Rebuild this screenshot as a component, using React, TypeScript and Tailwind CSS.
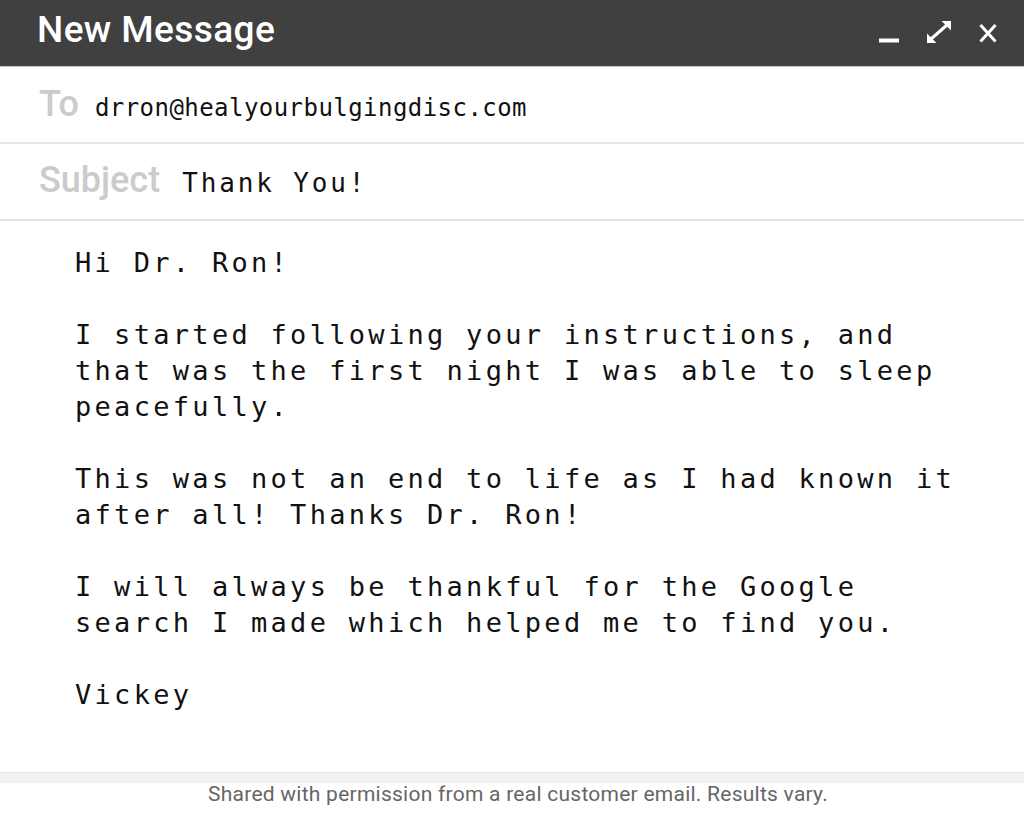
import React from "react";

const body = `Hi Dr. Ron!

I started following your instructions, and
that was the first night I was able to sleep
peacefully.

This was not an end to life as I had known it
after all! Thanks Dr. Ron!

I will always be thankful for the Google
search I made which helped me to find you.

Vickey`;

export default function App() {
  return (
    <div className="w-[1024px] h-[815px] flex flex-col bg-white overflow-hidden">
      <div className="h-[66px] shrink-0 bg-[#404040] flex items-start justify-between">
        <div className="pl-[37px] pt-[11px] text-white text-[37px] leading-[37px] tracking-[0.4px] font-medium font-['Roboto',sans-serif]">
          New Message
        </div>
        <div className="flex items-start gap-[28px] pr-[27px] pt-[21px]">
          <svg width="20" height="22" viewBox="0 0 20 22" className="block">
            <rect x="0" y="17.5" width="20" height="4" fill="white" />
          </svg>
          <svg width="24" height="22" viewBox="0 0 24 22" className="block">
            <line x1="4" y1="18" x2="20" y2="4" stroke="white" strokeWidth="3" />
            <polygon points="24,0 24,9.5 14.5,0" fill="white" />
            <polygon points="0,22 0,12.5 9.5,22" fill="white" />
          </svg>
          <svg width="18" height="22" viewBox="0 0 18 22" className="block">
            <line x1="1.5" y1="4" x2="16.5" y2="20.5" stroke="white" strokeWidth="3" />
            <line x1="16.5" y1="4" x2="1.5" y2="20.5" stroke="white" strokeWidth="3" />
          </svg>
        </div>
      </div>
      <div className="h-px shrink-0 bg-[#c4c4c4]" />
      <div className="h-[75px] shrink-0 flex items-baseline pt-[19px] pl-[39px]">
        <span className="text-[36px] leading-[36px] text-[#cbcbcb] font-medium font-['Roboto',sans-serif]">To</span>
        <span className="ml-[16px] text-[24px] leading-[24px] tracking-[0.45px] text-[#111] font-['DejaVu_Sans_Mono',monospace]">
          drron@healyourbulgingdisc.com
        </span>
      </div>
      <div className="h-[2px] shrink-0 bg-[#e4e4e4]" />
      <div className="h-[75px] shrink-0 flex items-baseline pt-[18px] pl-[39px]">
        <span className="text-[36px] leading-[36px] text-[#cbcbcb] font-medium font-['Roboto',sans-serif]">Subject</span>
        <span className="ml-[22px] text-[26px] leading-[26px] tracking-[2.85px] text-[#111] font-['DejaVu_Sans_Mono',monospace]">
          Thank You!
        </span>
      </div>
      <div className="h-[2px] shrink-0 bg-[#e4e4e4]" />
      <div className="flex-1 pt-[24px] pl-[75px]">
        <pre className="m-0 whitespace-pre text-[27px] leading-[36px] tracking-[3.3px] text-[#111] font-['DejaVu_Sans_Mono',monospace]">
          {body}
        </pre>
      </div>
      <div className="h-[43px] shrink-0 flex flex-col">
        <div className="h-px bg-[#e2e2e2]" />
        <div className="h-[10px] bg-[#f2f2f2]" />
        <div className="pt-[1px] pl-[12px] text-center text-[21px] leading-[21px] tracking-[0.25px] text-[#666] font-['Roboto',sans-serif]">
          Shared with permission from a real customer email. Results vary.
        </div>
      </div>
    </div>
  );
}
